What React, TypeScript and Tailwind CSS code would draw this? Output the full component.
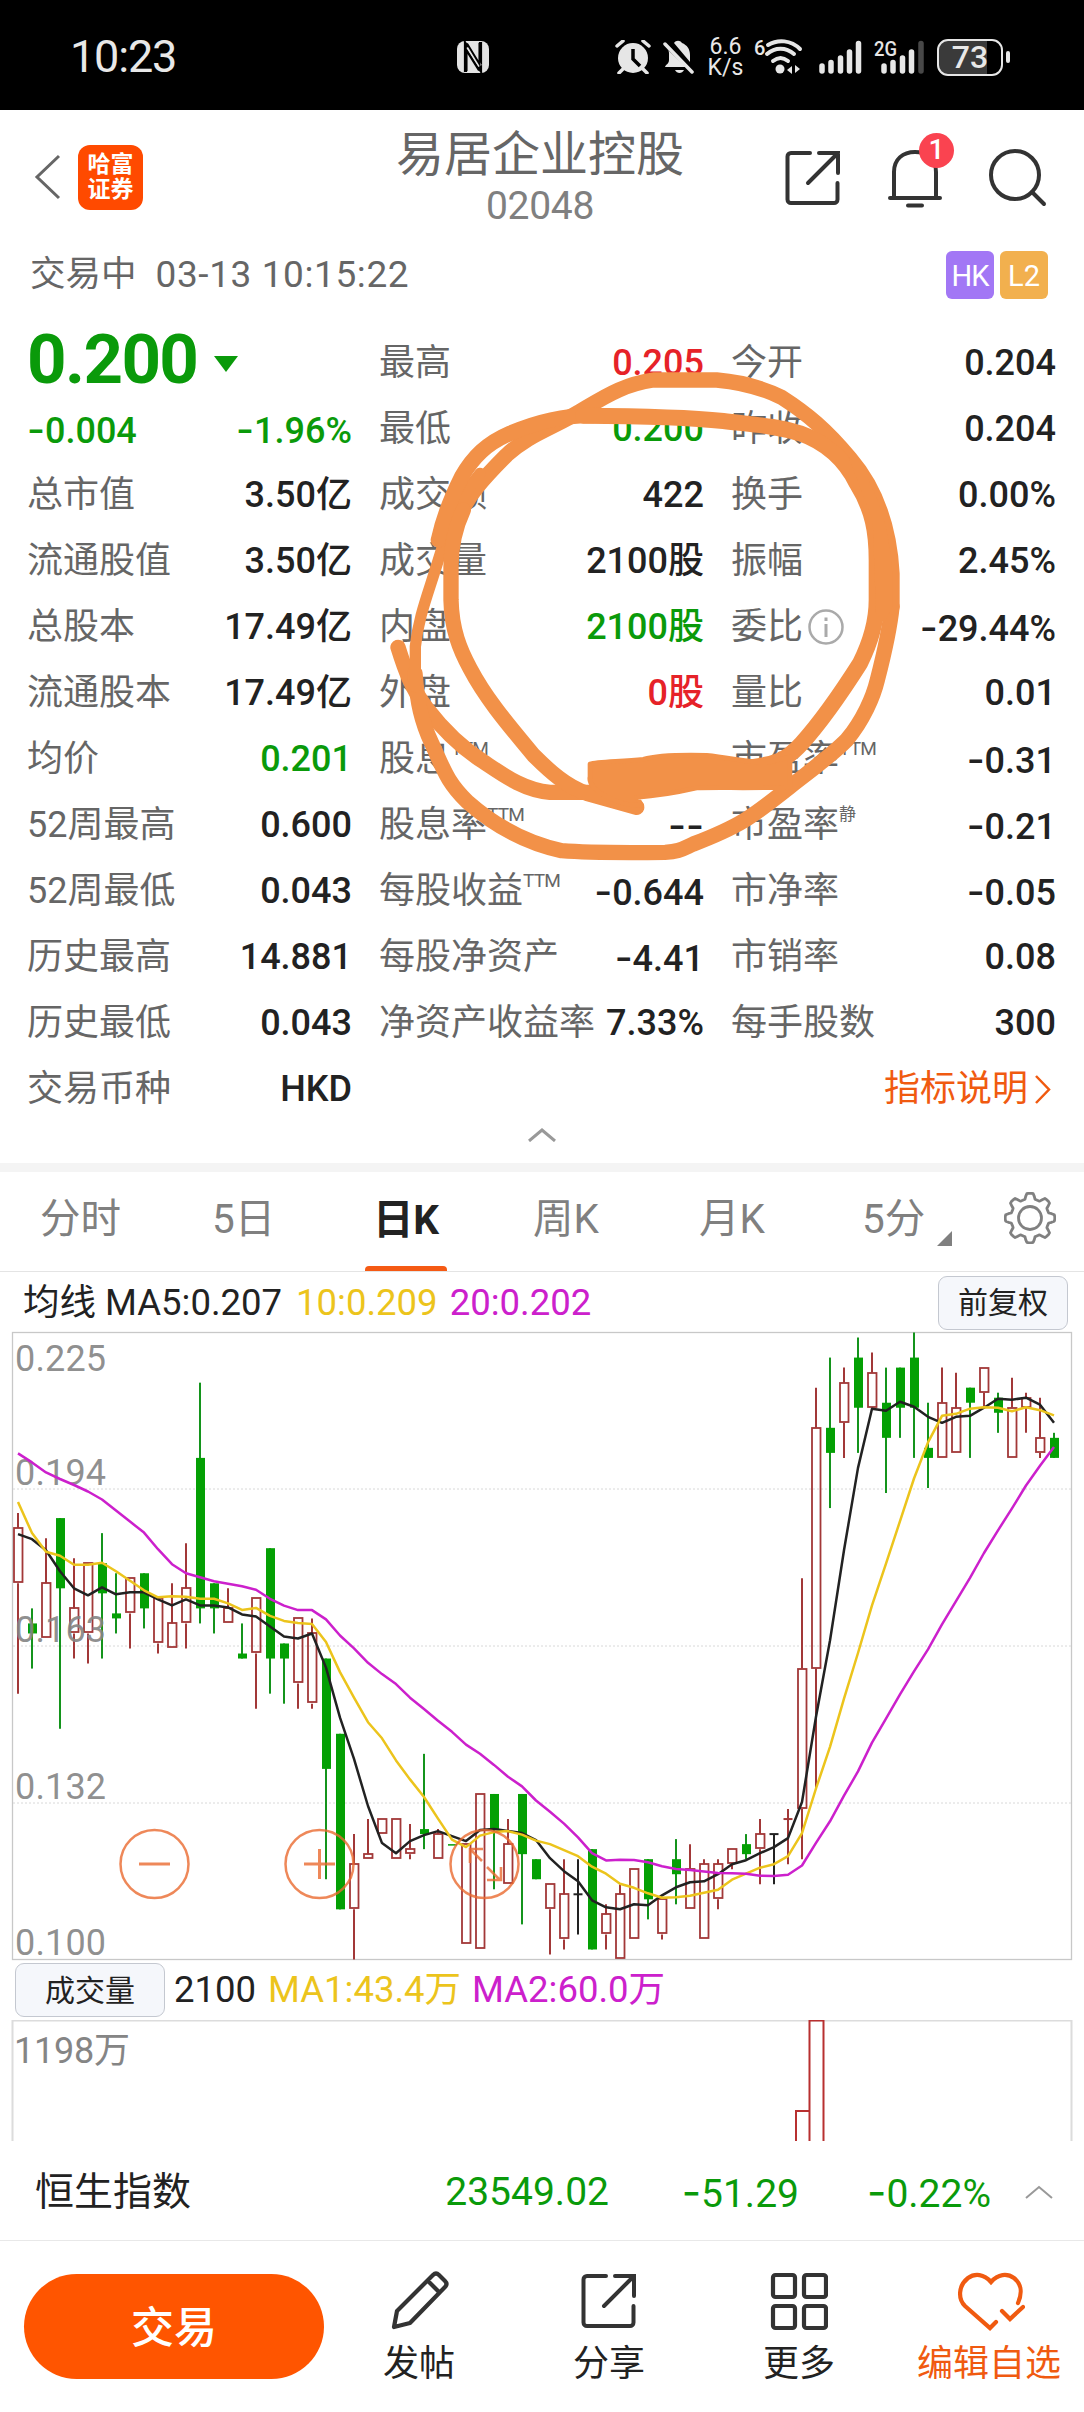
import { ReactNode } from 'react'
import { clsx } from 'clsx'

type Tone = 'dark' | 'green' | 'red'

interface Stat {
  label: string
  value: string
  sup?: string
  tone?: Tone
  info?: boolean
}

const columnA: Stat[] = [
  { label: '总市值', value: '3.50亿' },
  { label: '流通股值', value: '3.50亿' },
  { label: '总股本', value: '17.49亿' },
  { label: '流通股本', value: '17.49亿' },
  { label: '均价', value: '0.201', tone: 'green' },
  { label: '52周最高', value: '0.600' },
  { label: '52周最低', value: '0.043' },
  { label: '历史最高', value: '14.881' },
  { label: '历史最低', value: '0.043' },
  { label: '交易币种', value: 'HKD' },
]

const columnB: Stat[] = [
  { label: '最高', value: '0.205', tone: 'red' },
  { label: '最低', value: '0.200', tone: 'green' },
  { label: '成交额', value: '422' },
  { label: '成交量', value: '2100股' },
  { label: '内盘', value: '2100股', tone: 'green' },
  { label: '外盘', value: '0股', tone: 'red' },
  { label: '股息', sup: 'TTM', value: '' },
  { label: '股息率', sup: 'TTM', value: '--' },
  { label: '每股收益', sup: 'TTM', value: '-0.644' },
  { label: '每股净资产', value: '-4.41' },
  { label: '净资产收益率', value: '7.33%' },
]

const columnC: Stat[] = [
  { label: '今开', value: '0.204' },
  { label: '昨收', value: '0.204' },
  { label: '换手', value: '0.00%' },
  { label: '振幅', value: '2.45%' },
  { label: '委比', value: '-29.44%', info: true },
  { label: '量比', value: '0.01' },
  { label: '市盈率', sup: 'TTM', value: '-0.31' },
  { label: '市盈率', sup: '静', value: '-0.21' },
  { label: '市净率', value: '-0.05' },
  { label: '市销率', value: '0.08' },
  { label: '每手股数', value: '300' },
]

const toneClass: Record<Tone, string> = {
  dark: 'text-[#222222]',
  green: 'text-[#0a9a0a]',
  red: 'text-[#e62228]',
}

// kind, body top, body bottom, high, low (prices x 1000)
type Candle = [string, number, number, number, number]

const candles: Candle[] = [
  ['r', 186, 175, 189, 153], ['g', 167, 165, 170, 158], ['r', 175, 164, 184, 164], ['g', 188, 174, 188, 146],
  ['r', 170, 165, 180, 160], ['r', 179, 165, 179, 159], ['g', 179, 173, 185, 160], ['g', 169, 168, 177, 165],
  ['r', 176, 169, 176, 162], ['g', 177, 170, 177, 166], ['r', 172, 163, 172, 161], ['r', 167, 162, 175, 162],
  ['r', 174, 167, 183, 162], ['g', 200, 170, 215, 167], ['g', 175, 170, 175, 165], ['r', 170, 167, 174, 167],
  ['g', 161, 160, 167, 160], ['r', 172, 161, 172, 150], ['g', 182, 160, 182, 153], ['g', 163, 160, 163, 151],
  ['r', 168, 155, 168, 150], ['r', 165, 151, 168, 150], ['g', 160, 138, 160, 116], ['g', 145, 110, 145, 110],
  ['r', 119, 110, 125, 100], ['r', 121, 120, 128, 120], ['r', 128, 125, 128, 125], ['r', 128, 120, 128, 120],
  ['r', 122, 121, 127, 120], ['g', 126, 125, 141, 122], ['r', 125, 120, 126, 120], ['g', 123, 123, 123, 123],
  ['r', 123, 103, 123, 103], ['r', 133, 102, 133, 102], ['g', 133, 126, 133, 114], ['r', 123, 115, 128, 115],
  ['g', 133, 121, 133, 107], ['g', 120, 116, 120, 116], ['r', 115, 110, 115, 101], ['r', 113, 104, 120, 102],
  ['k', 113, 113, 120, 105], ['g', 122, 102, 122, 102], ['r', 109, 105, 111, 102], ['r', 113, 100, 115, 100],
  ['r', 118, 104, 118, 104], ['g', 120, 112, 120, 108], ['r', 112, 105, 112, 104], ['g', 120, 117, 124, 111],
  ['r', 118, 110, 123, 110], ['r', 119, 104, 120, 104], ['r', 119, 112, 120, 110], ['r', 122, 119, 122, 118],
  ['g', 123, 121, 125, 120], ['r', 125, 122, 128, 115], ['k', 125, 125, 125, 115], ['r', 128, 128, 130, 119],
  ['r', 158, 130, 176, 120], ['r', 206, 158, 214, 134], ['g', 206, 201, 220, 190], ['r', 215, 207, 218, 200],
  ['g', 220, 210, 224, 201], ['r', 217, 210, 221, 210], ['g', 211, 204, 218, 193], ['g', 218, 210, 218, 204],
  ['g', 220, 210, 225, 200], ['g', 202, 200, 211, 194], ['r', 211, 200, 218, 200], ['r', 210, 201, 217, 201],
  ['g', 214, 211, 214, 200], ['r', 218, 213, 218, 210], ['g', 212, 209, 213, 205], ['r', 210, 200, 216, 200],
  ['r', 212, 210, 213, 205], ['r', 204, 201, 212, 200], ['g', 204, 200, 205, 200],
]

const closes = candles.map(([kind, top, bottom]) => (kind === 'g' ? bottom : top))

// averages of the first days reach back past the visible window
const ma5Head = [184.8, 183.8, 181.6, 177.4]
const ma10Head = [191.2, 185, 181.3, 180.5, 178.7, 178.7, 179.1, 177.4, 175.5]
const ma20Head = [
  200.9, 199.1, 197.1, 195.8, 194.6, 193.3, 191.7, 189.5, 187.3, 185.1, 181.8, 178.8, 177, 176.2, 175.4, 174.9, 174.4,
  173.7, 171.9,
]

const priceY = (p: number) => 0.5 + (225 - p) * 5.016
const dayX = (i: number) => 18 + i * 14

const averageLine = (days: number, head: number[]) =>
  closes
    .map((_, i) => {
      const avg = i < head.length ? head[i] : closes.slice(i - days + 1, i + 1).reduce((a, b) => a + b, 0) / days
      return `${dayX(i)},${priceY(avg).toFixed(1)}`
    })
    .join(' ')

const CandleShape = ({ candle, x }: { candle: Candle; x: number }) => {
  const [kind, top, bottom, high, low] = candle
  const y1 = priceY(top)
  const y2 = priceY(bottom)
  if (kind === 'g') {
    return (
      <g fill="#04a004">
        <rect x={x - 1} y={priceY(high)} width={2} height={priceY(low) - priceY(high)} fill="#14941c" />
        <rect x={x - 4} y={y1} width={9} height={Math.max(y2 - y1, 1.5)} />
      </g>
    )
  }
  const color = kind === 'k' ? '#222222' : '#a23838'
  return (
    <g stroke={color} strokeWidth={2} fill="none">
      <path d={`M${x} ${priceY(high)}V${y1}M${x} ${y2}V${priceY(low)}`} />
      {top === bottom ? (
        <path d={`M${x - 4.5} ${y1}h9`} />
      ) : (
        <rect x={x - 4} y={Math.round(y1)} width={8.5} height={Math.max(Math.round(y2 - y1 - 1), 4)} strokeWidth={1.8} />
      )}
    </g>
  )
}

const axisLabels = [
  { text: '0.225', y: 39 },
  { text: '0.194', y: 153 },
  { text: '0.163', y: 310 },
  { text: '0.132', y: 467 },
  { text: '0.100', y: 623 },
]

const KLineChart = () => (
  <svg width="1084" height="628" viewBox="0 0 1084 628" className="block overflow-visible">
    <rect x="12.5" y="0.5" width="1059" height="627" fill="none" stroke="#c8c8c8" strokeWidth="1.3" />
    {[157, 314, 471].map((y) => (
      <line key={y} x1="13" x2="1071" y1={y} y2={y} stroke="#d8d8d8" strokeDasharray="2 2" />
    ))}
    {candles.map((candle, i) => (
      <CandleShape key={i} candle={candle} x={dayX(i)} />
    ))}
    {axisLabels.map((label) => (
      <text key={label.text} x="15" y={label.y} fontSize="36" fill="#858585" fillOpacity="0.92" textLength="91">
        {label.text}
      </text>
    ))}
    <g fill="none" strokeWidth="2.5" strokeLinejoin="round">
      <polyline points={averageLine(5, ma5Head)} stroke="#222222" />
      <polyline points={averageLine(10, ma10Head)} stroke="#ecc41c" />
      <polyline points={averageLine(20, ma20Head)} stroke="#cc20cc" />
    </g>
    <g fill="none" stroke="#ea6a30" strokeOpacity="0.8" strokeWidth="2.5">
      <circle cx="154.5" cy="532" r="34" />
      <path d="M139 532h31" strokeWidth="3" />
      <circle cx="319.5" cy="532" r="34" />
      <path d="M304 532h31M319.500 517v30" strokeWidth="3" />
      <circle cx="484.5" cy="532" r="34" />
      <path d="M482 529l-12-12M470 531v-14h13M487 535l13 13M487 548h14v-13" strokeWidth="2.600" />
    </g>
  </svg>
)

const VolumeChart = () => (
  <svg width="1084" height="121" viewBox="0 0 1084 121" className="block">
    <path d="M12.500 121V0.500H1071.500V121" fill="none" stroke="#dcdcdc" strokeWidth="2" />
    <text x="14" y="43" fontSize="36" fill="#858585" textLength="116">
      1198万
    </text>
    <path d="M796 121V91h13.500V121M809.500 121V0.500h14V121" fill="none" stroke="#b83030" strokeWidth="2" />
  </svg>
)

const StatusBar = () => (
  <div className="flex h-[110px] items-center bg-black pt-1 pr-[74px] pl-[70px] text-[#e8e8e8]">
    <span className="w-[387px] text-[45px] tracking-[-1.2px]">10:23</span>
    <svg width="32" height="32" viewBox="0 0 32 32">
      <rect width="32" height="32" rx="8" fill="#e4e4e4" />
      <path d="M8.500 31V3L22 24M23.500 1v28L10 8" fill="none" stroke="#000" strokeWidth="3.200" />
      <path d="M11 6l12 19" stroke="#e4e4e4" strokeWidth="4" />
      <path d="M9.500 30V9.500L22 29.500M22.500 2v21L10 2.500" fill="none" stroke="#000" strokeWidth="2" />
    </svg>
    <div className="ml-auto flex items-center">
      <svg width="36" height="34" viewBox="0 0 36 34" className="mr-3">
        <circle cx="18" cy="18" r="15" fill="#e6e6e6" />
        <path d="M2 6l6-5M34 6l-6-5M8 29l-4 4M28 29l4 4" stroke="#e6e6e6" strokeWidth="3.500" strokeLinecap="round" />
        <path d="M18 9v10l7 7" fill="none" stroke="#000" strokeWidth="3.500" />
      </svg>
      <svg width="31" height="34" viewBox="0 0 31 34" className="mr-[14px]">
        <path d="M11 3c2-3 6-3 8 0 5 2 8 6 8 12v7zM4 9L23 27H2c1-3 4-3 4-7v-6c0-2 0-3-2-5z" fill="#e6e6e6" />
        <path d="M2 4l27 28" stroke="#e6e6e6" strokeWidth="3.500" strokeLinecap="round" />
        <path d="M12 30h9c-2 4-7 4-9 0z" fill="#e6e6e6" />
      </svg>
      <div className="mr-[11px] flex w-[35px] flex-col items-center text-[23px] leading-[21px]">
        <span>6.6</span>
        <span>K/s</span>
      </div>
      <div className="mr-4 flex h-9 w-[49px] items-start">
        <span className="w-[11px] text-[20px] leading-[19px] font-medium">6</span>
        <svg width="38" height="36" viewBox="11 0 38 36" className="overflow-visible">
          <g fill="none" stroke="#e6e6e6" strokeWidth="4" strokeLinecap="round">
            <path d="M14 6c10-6 23-5 32 4M13 15c8-7 19-7 27 0M19 22c5-4 10-4 15 0" />
          </g>
          <circle cx="26" cy="30" r="4.500" fill="#e6e6e6" />
          <path d="M38 27v8l-5-4zM41 34v-8l5 4z" fill="#e6e6e6" />
        </svg>
      </div>
      <svg width="43" height="34" viewBox="0 0 43 34" className="mr-3">
        <g stroke="#e6e6e6" strokeWidth="5.500" strokeLinecap="round">
          <path d="M3 26v5M12 22.500v8.500M21.500 18v13M30.500 12v19M39.500 3.500V31" />
        </g>
      </svg>
      <svg width="51" height="34" viewBox="0 0 51 34" className="mr-3 overflow-visible">
        <text x="0" y="16" fontSize="20" fontWeight="500" fill="#e6e6e6" textLength="23" lengthAdjust="spacingAndGlyphs">
          2G
        </text>
        <g stroke="#e6e6e6" strokeWidth="5.500" strokeLinecap="round">
          <path d="M10 26v5M19 22.500v8.500M28.500 18v13M37.500 12v19" />
          <path d="M47 3.500V31" stroke="#484848" />
        </g>
      </svg>
      <div className="flex h-[37px] w-[66px] items-center justify-center rounded-[11px] border-[2.5px] border-[#e6e6e6] bg-[linear-gradient(90deg,#3a3a3a_78%,#000_78%)] text-[32px] leading-none font-medium">
        73
      </div>
      <div className="ml-[3px] h-3 w-1 rounded-full bg-[#e6e6e6]" />
    </div>
  </div>
)

const ShareIcon = () => (
  <svg width="56" height="56" viewBox="0 0 56 56" fill="none" stroke="#333333" strokeWidth="4" strokeLinecap="round">
    <path d="M25 3H6a3.500 3.500 0 0 0-3.500 3.500v43A3.500 3.500 0 0 0 6 53h43a3.500 3.500 0 0 0 3.500-3.500V33M34 3h19v20M53 3L23 33" />
  </svg>
)

const Header = () => (
  <header className="grid h-[135px] grid-cols-3 items-center pr-[37px] pl-[33px]">
    <div className="flex items-center gap-[17px] pb-px">
      <svg width="28" height="46" viewBox="0 0 28 46" fill="none" stroke="#666666" strokeWidth="3">
        <path d="M26 2L4 23l22 21" />
      </svg>
      <div className="grid h-[65px] w-[65px] place-content-center rounded-[12px] bg-[#ff4a00] text-center text-[23px] leading-[25px] font-bold text-white">
        哈富
        <br />
        证券
      </div>
    </div>
    <div className="flex flex-col items-center pb-px">
      <h1 className="text-[48px] leading-[58px] whitespace-nowrap text-[#666666]">易居企业控股</h1>
      <span className="text-[39px] leading-[44px] tracking-[-0.3px] text-[#808080]">02048</span>
    </div>
    <div className="flex items-center justify-end gap-[46px]">
      <ShareIcon />
      <div className="relative">
        <svg width="56" height="60" viewBox="0 0 56 60" fill="none" stroke="#333333" strokeWidth="4" strokeLinecap="round">
          <path d="M7 50V24C7 11 16 4 28 4s21 7 21 20v26M3 50h50M21 57.500h14" />
        </svg>
        <span className="absolute -top-[15px] left-[32px] flex h-[35px] w-[35px] items-center justify-center rounded-full bg-[#fa4350] text-[28px] leading-none font-medium text-white">
          1
        </span>
      </div>
      <svg width="58" height="59" viewBox="0 0 58 59" fill="none" stroke="#333333" strokeWidth="4" strokeLinecap="round">
        <circle cx="26" cy="27" r="24" />
        <path d="M43 44l12 12" />
      </svg>
    </div>
  </header>
)

// the leading minus is set in Inter, whose hyphen is as wide as the one on the quote board
const Num = ({ children }: { children: string }) => {
  const dashes = children.match(/^-+/)?.[0] ?? ''
  return (
    <>
      {dashes && <span className="font-['Inter'] text-[1.08em]">{dashes}</span>}
      {children.slice(dashes.length)}
    </>
  )
}

const StatRow = ({ stat }: { stat: Stat }) => (
  <div className="flex h-[66px] items-center justify-between pt-[2px] whitespace-nowrap">
    <span className="-ml-px flex items-center text-[36px] text-[#666666]">
      {stat.label}
      {stat.sup && (
        <span className={clsx('-mt-5', stat.sup === 'TTM' ? 'text-[19px] tracking-[-0.8px]' : 'text-[17px]')}>
          {stat.sup}
        </span>
      )}
      {stat.info && (
        <svg width="36" height="36" viewBox="0 0 36 36" fill="none" stroke="#aaaaaa" strokeWidth="2.500" className="ml-[5px]">
          <circle cx="18" cy="18" r="16.500" />
          <path d="M18 15v13M18 8.500v3.500" strokeWidth="3" />
        </svg>
      )}
    </span>
    <span className={clsx('text-[36px] font-medium', toneClass[stat.tone ?? 'dark'])}>
      <Num>{stat.value}</Num>
    </span>
  </div>
)

// freehand marker loops drawn over the quote table
const MarkerCircle = () => (
  <svg
    width="520"
    height="510"
    viewBox="0 0 1560 1530"
    className="pointer-events-none absolute top-[31px] left-[380px]"
    fill="none"
    stroke="#f29148"
    strokeLinecap="round"
    strokeLinejoin="round"
  >
    <path
      d="M54 862C75 930 95 985 140 1045C190 1110 240 1160 310 1205C370 1245 430 1290 510 1297H660"
      strokeWidth="46"
    />
    <path
      d="M105 940C112 1030 125 1085 155 1150C190 1225 200 1265 262 1325C330 1385 420 1445 545 1472C620 1478 770 1478 855 1477C900 1475 910 1465 940 1452C1080 1398 1110 1375 1230 1280C1300 1225 1350 1190 1400 1140C1450 1080 1480 1010 1492 960C1510 890 1530 800 1536 740"
      strokeWidth="46"
    />
    <path
      d="M1536 740V640C1530 530 1500 400 1410 295C1340 210 1280 160 1205 112C1150 85 1080 66 1010 60H820C740 72 690 100 620 142C520 205 450 220 380 285C310 355 260 410 232 480"
      strokeWidth="46"
    />
    <path d="M300 340C240 410 205 500 175 600C145 700 115 770 106 860V980" strokeWidth="34" />
    <path
      d="M640 167C540 165 460 190 390 220C320 250 280 290 245 350C215 410 190 470 175 540"
      strokeWidth="46"
    />
    <path
      d="M250 450C222 510 213 560 213 620V720C215 810 240 870 270 925C320 1020 390 1100 460 1185C510 1235 560 1280 620 1300L770 1342"
      strokeWidth="46"
    />
    <path
      d="M610 167C780 168 930 172 1030 183C1130 195 1190 198 1260 220C1330 245 1390 290 1430 370C1480 450 1490 520 1490 600V720C1490 790 1470 850 1440 910C1370 1020 1310 1100 1265 1150C1220 1200 1190 1215 1080 1225"
      strokeWidth="48"
    />
    <path
      d="M630 1212C650 1205 720 1205 790 1198C830 1186 900 1184 980 1186C1060 1194 1120 1212 1170 1206L1230 1190V1282C1120 1285 1000 1282 950 1284C880 1300 830 1308 770 1312L785 1335C720 1340 620 1290 630 1250Z"
      fill="#f29148"
      strokeWidth="14"
    />
    <path d="M1405 290L1450 330C1500 420 1530 520 1537 640V740L1512 790L1488 760L1478 480Z" fill="#f29148" stroke="none" />
  </svg>
)

const QuoteBoard = () => (
  <section className="relative px-7">
    <div className="grid grid-cols-3 gap-x-7">
      <div>
        <div className="flex h-[66px] items-center gap-[16px] pb-[4px] text-[#0a9a0a]">
          <span className="-ml-px text-[69px] leading-[66px] font-bold tracking-[-1.6px]">0.200</span>
          <svg width="26" height="16" viewBox="0 0 26 16" className="mt-2">
            <path d="M1 0h24L13 16z" fill="#0a9a0a" />
          </svg>
        </div>
        <div className="flex h-[66px] items-center justify-between pt-[2px] text-[36px] font-medium text-[#0a9a0a]">
          <span className="-ml-px">
            <Num>-0.004</Num>
          </span>
          <span>
            <Num>-1.96%</Num>
          </span>
        </div>
        {columnA.map((stat) => (
          <StatRow key={stat.label} stat={stat} />
        ))}
      </div>
      <div>
        {columnB.map((stat) => (
          <StatRow key={stat.label} stat={stat} />
        ))}
      </div>
      <div>
        {columnC.map((stat) => (
          <StatRow key={stat.label + stat.value} stat={stat} />
        ))}
        <div className="flex h-[66px] items-center justify-end gap-[6px] pt-[2px] pr-[5px] text-[36px] text-[#f05a10]">
          指标说明
          <svg width="17" height="29" viewBox="0 0 17 29" fill="none" stroke="#f05a10" strokeWidth="2.500">
            <path d="M2 1l13 13.500L2 28" />
          </svg>
        </div>
      </div>
    </div>
    <div className="flex h-[42px] justify-center pt-[7px]">
      <svg width="28" height="14" viewBox="0 0 28 14" fill="none" stroke="#999999" strokeWidth="3">
        <path d="M1 13L14 2l13 11" />
      </svg>
    </div>
    <MarkerCircle />
  </section>
)

// eight-toothed wheel outline
const gearPath =
  Array.from({ length: 96 }, (_, i) => {
    const angle = (i / 96) * Math.PI * 2
    const wave = Math.max(-1, Math.min(1, Math.cos(angle * 8) * 1.8))
    const r = 22 + wave * 2.8
    return `${i === 0 ? 'M' : 'L'}${(26 + r * Math.sin(angle)).toFixed(1)} ${(26 - r * Math.cos(angle)).toFixed(1)}`
  }).join('') + 'Z'

const Tabs = () => (
  <nav className="flex h-[100px] items-stretch border-b border-[#e4e4e4] pl-[40px] text-[40.5px] text-[#808080]">
    <span className="flex w-[172px] items-center pb-[4px]">分时</span>
    <span className="flex w-[153px] items-center pb-[4px]">5日</span>
    <span className="flex w-[82px] flex-col items-center justify-between font-bold text-[#222222]">
      <span className="flex flex-1 items-center pt-[2px]">日K</span>
      <span className="h-[5px] w-full rounded-t-sm bg-[#f55a14]" />
    </span>
    <span className="ml-[86px] flex w-[166px] items-center pb-[4px]">周K</span>
    <span className="flex w-[163px] items-center pb-[4px]">月K</span>
    <span className="flex w-[66px] items-center pb-[4px] whitespace-nowrap">5分</span>
    <svg width="15" height="15" viewBox="0 0 15 15" className="mt-[59px] ml-[9px]">
      <path d="M15 0v15H0z" fill="#808080" />
    </svg>
    <svg width="52" height="52" viewBox="0 0 52 52" fill="none" stroke="#808080" strokeWidth="2.800" className="mt-[20px] ml-[52px]">
      <path d={gearPath} strokeLinejoin="round" />
      <circle cx="26" cy="26" r="11.500" />
    </svg>
  </nav>
)

const PillButton = ({ children, className }: { children: ReactNode; className?: string }) => (
  <button
    className={clsx(
      'flex h-[54px] items-center justify-center rounded-[9px] border-[1.5px] border-[#c4c8d0] bg-[#f5f7fb] text-[30px] text-[#222222]',
      className,
    )}
  >
    {children}
  </button>
)

const IndexBar = () => (
  <div className="flex h-[100px] items-center border-b border-[#e8e8e8] pt-[3px] pr-[31px] pl-[35px] text-[39px]">
    <span className="text-[#222222]">恒生指数</span>
    <div className="ml-auto flex items-center text-[#0a9a0a]">
      <span className="w-[164px] text-right">23549.02</span>
      <span className="w-[190px] text-right">
        <Num>-51.29</Num>
      </span>
      <span className="w-[192px] text-right">
        <Num>-0.22%</Num>
      </span>
      <svg width="28" height="14" viewBox="0 0 28 14" fill="none" stroke="#999999" strokeWidth="2" className="ml-[34px]">
        <path d="M1 13L14 2l13 11" />
      </svg>
    </div>
  </div>
)

const ToolItem = ({ label, accent, children }: { label: string; accent?: boolean; children: ReactNode }) => (
  <div
    className={clsx(
      'flex w-[190px] flex-col items-center text-[36px] leading-[46px] whitespace-nowrap',
      accent ? 'text-[#f05a10]' : 'text-[#222222]',
    )}
  >
    <div className="flex h-[70px] items-start justify-center">{children}</div>
    {label}
  </div>
)

const BottomBar = () => (
  <footer className="flex h-[171px] items-start pt-[30px] pl-6">
    <button className="mt-[3px] h-[105px] w-[300px] rounded-full bg-[#ff5500] pt-[3px] text-[43px] font-medium text-white">
      交易
    </button>
    <ToolItem label="发帖">
      <svg width="60" height="60" viewBox="0 0 60 60" fill="none" stroke="#333333" strokeWidth="4.200" strokeLinejoin="round" className="ml-1">
        <path d="M3 56l3-16L42 4c2-2 4-2 6 0l6 6c2 2 2 4 0 6L19 52zM37 10l11 11" />
      </svg>
    </ToolItem>
    <ToolItem label="分享">
      <div className="pt-[2px]">
        <ShareIcon />
      </div>
    </ToolItem>
    <ToolItem label="更多">
      <svg width="58" height="60" viewBox="0 0 58 60" fill="none" stroke="#333333" strokeWidth="4.200">
        <rect x="3" y="4" width="22" height="22" rx="2.500" />
        <rect x="34" y="4" width="22" height="22" rx="2.500" />
        <rect x="3" y="35" width="22" height="22" rx="2.500" />
        <rect x="34" y="35" width="22" height="22" rx="2.500" />
      </svg>
    </ToolItem>
    <ToolItem label="编辑自选" accent>
      <svg width="68" height="60" viewBox="0 0 68 60" fill="none" stroke="#f05a10" strokeWidth="4.200" strokeLinecap="round" className="ml-1">
        <path d="M61 32C65 23 65 13 57 7C50 2 41 3 34 11C27 3 18 2 11 7C1 15 1 28 8 35L33 57L39 51" />
        <path d="M45 40l8 8 13-12" />
      </svg>
    </ToolItem>
  </footer>
)

const App = () => (
  <div className="h-[2412px] w-[1084px] overflow-hidden bg-white font-['Roboto','Noto_Sans_CJK_SC',sans-serif]">
    <StatusBar />
    <Header />

    <div className="flex h-[84px] items-center pr-[36px] pb-[24px] pl-[30px] text-[37px] text-[#666666]">
      <span className="text-[35.5px]">交易中</span>
      <span className="ml-[19px] tracking-[0.6px]">03-13 10:15:22</span>
      <div className="ml-auto flex gap-[6px] text-[29px] text-white">
        <span className="flex h-12 w-12 items-center justify-center rounded-md bg-[#a277f5] pt-[3px] tracking-[-1px]">HK</span>
        <span className="flex h-12 w-12 items-center justify-center rounded-md bg-[#f2b04e] pt-[3px]">L2</span>
      </div>
    </div>

    <QuoteBoard />
    <div className="h-[9px] bg-[#f4f4f4]" />
    <Tabs />

    {/* Moving averages */}
    <div className="flex h-[60px] items-center pt-px pr-[16px] pl-[23px] text-[36.5px] whitespace-nowrap">
      <span className="pt-[2px] text-[#222222]">均线 MA5:0.207</span>
      <span className="ml-[14px] pt-[2px] text-[#ecc41c]">10:0.209</span>
      <span className="ml-[12px] pt-[2px] text-[#cc20cc]">20:0.202</span>
      <PillButton className="ml-auto w-[130px]">前复权</PillButton>
    </div>
    <KLineChart />

    {/* Volume */}
    <div className="flex h-[60px] items-center pr-4 pl-[15px] text-[36.5px] whitespace-nowrap">
      <PillButton className="w-[150px]">成交量</PillButton>
      <span className="ml-[9px] pt-px text-[#222222]">2100</span>
      <span className="ml-[12px] pt-px text-[#ecc41c]">MA1:43.4万</span>
      <span className="ml-[11px] pt-px text-[#cc20cc]">MA2:60.0万</span>
    </div>
    <VolumeChart />

    <IndexBar />
    <BottomBar />
  </div>
)

export default App
